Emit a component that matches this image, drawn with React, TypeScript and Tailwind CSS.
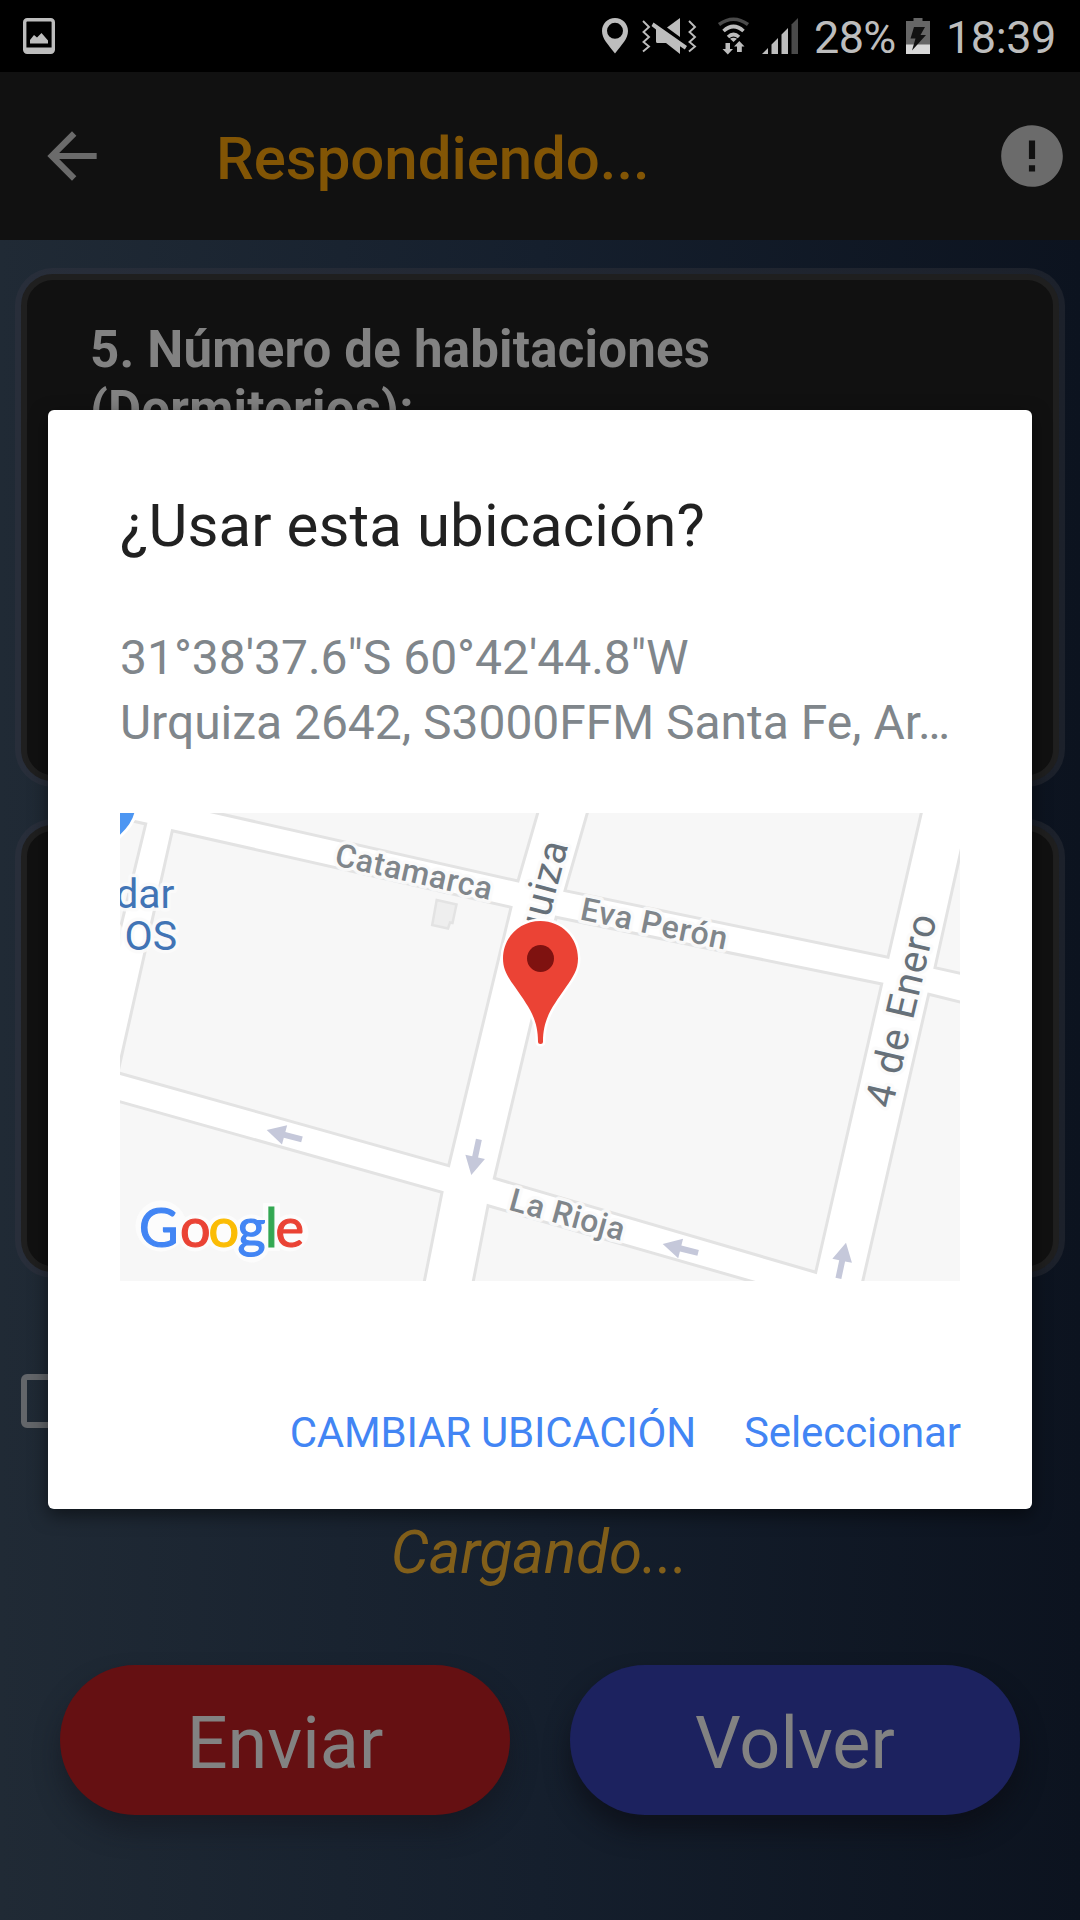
import type { ReactNode } from 'react';

const HEADER_ICON = '#6b6b6b';

function StatusBar() {
  return (
    <div className="flex h-[72px] items-center bg-black pl-[23px] pr-[24px] text-[45px] leading-none text-[#bdbdbd]">
      <svg width="32" height="36" viewBox="0 0 32 36" className="shrink-0">
        <rect x="1.7" y="1.7" width="28.6" height="32.6" rx="2.5" fill="none" stroke="#bdbdbd" strokeWidth="3.4" />
        <path d="M1 29.5H31V34H1Z" fill="#bdbdbd" />
        <path d="M7 25.5V22L11 17L14 19.5L18.5 15L25 22.5V25.5Z" fill="#bdbdbd" />
      </svg>
      <div className="grow" />
      <svg width="200" height="40" viewBox="600 16 200 40" className="mr-[15px] shrink-0" fill="#bdbdbd">
        <path
          fillRule="evenodd"
          d="M616 18C608.5 18 603 23.700 603 31C603 39 609 44 616 53.600C623 44 629 39 629 31C629 23.700 623.500 18 616 18ZM616 22.800A8 8 0 0 1 616 38.800A8 8 0 0 1 616 22.800Z"
        />
        <g fill="none" stroke="#bdbdbd" strokeWidth="1.900">
          <path d="M644 21L650 27L644.500 32L650 37L644.500 42L650 46.500L644 51.500" />
          <path d="M690 21L696 27L690.500 32L696 37L690.500 42L696 46.500L690 51.500" />
        </g>
        <path d="M681 18V37L668 27.500Z" />
        <path d="M654.500 22.500L688 46L685.800 49.500L681 46.200V54L667 43H658.500Q657 43 657 41.500V29.500L652.500 26Z" />
        <g fill="none" strokeWidth="3.600">
          <path d="M720 24.500Q734.500 14 749 24.500" stroke="#4a4a4a" />
          <path d="M724.500 31Q734.500 22 744.500 31" stroke="#bdbdbd" />
          <path d="M729 37Q734.500 32 740 37" stroke="#bdbdbd" />
        </g>
        <path d="M734.500 42L731 38.800Q734.500 36.800 738 38.800Z" />
        <path d="M726.500 43H731V49H734L728.800 54.500L723.500 49H726.500Z" />
        <path d="M738 52V46.500H735L740.300 41L745.500 46.500H742.800V52Z" />
        <path d="M763 54L769 48V54ZM772.500 54V44.500L779 38V54ZM782.500 54V34.500L789 28V54Z" />
        <path d="M792.500 54V24.500L799 18V54Z" fill="#4a4a4a" />
      </svg>
      <span className="mt-[2px] w-[80px] whitespace-nowrap tracking-[-0.6px]">28%</span>
      <svg width="24" height="36" viewBox="0 0 24 36" className="ml-[12px] mr-[16px] shrink-0">
        <path d="M7.500 0H16.500V3H24V36H0V3H7.500Z" fill="#666" />
        <path d="M0 26.500H24V36H0Z" fill="#d8d8d8" />
        <path d="M8 9H19L14.500 17H20L6 32.500L9.500 20.500H4.500Z" fill="#111" />
      </svg>
      <span className="mt-[2px] whitespace-nowrap tracking-[-0.4px]">18:39</span>
    </div>
  );
}

function Header() {
  return (
    <header className="flex h-[168px] items-center bg-[#111111] pl-[35px] pr-[11px]">
      <svg width="74" height="74" viewBox="0 0 24 24" fill={HEADER_ICON}>
        <path d="M20 11H7.830l5.590-5.590L12 4l-8 8 8 8 1.410-1.410L7.830 13H20v-2z" />
      </svg>
      <h1 className="ml-[107px] mt-[6px] grow text-[60px] font-medium leading-[72px] tracking-[-0.05px] text-[#825505]">Respondiendo...</h1>
      <svg width="74" height="74" viewBox="0 0 24 24" fill={HEADER_ICON}>
        <path d="M12 2C6.480 2 2 6.480 2 12s4.480 10 10 10 10-4.480 10-10S17.520 2 12 2zm1 15h-2v-2h2v2zm0-4h-2V7h2v6z" />
      </svg>
    </header>
  );
}

function Card({ className, children }: { className: string; children?: ReactNode }) {
  return (
    <section className={`mx-[15px] rounded-[38px] bg-linear-to-r from-[#282e3a] to-[#1c212b] p-[6px] ${className}`}>
      <div className="h-full rounded-[32px] border-[6px] border-[#1f1f1f] bg-[#111111] px-[63px] pt-[40px]">{children}</div>
    </section>
  );
}

const BLOCKS = [
  '-10,3 25.700,11 -10,158',
  '52.300,17.700 391,94.300 328.700,352.700 -2.200,259.700',
  '50,-10.500 398,68 420.600,-10',
  '470.200,-10 445,77.700 768,144.300 803.600,-10',
  '850,-3 815,154.700 850,162.500',
  '436.200,104.300 761.700,171 695.700,459.300 374.300,365.300',
  '808.700,181.300 850,191.500 850,480 740,480',
  '-10,285.900 322,379.300 302,480 -10,480',
  '368,392.700 351,480 672,480',
];

const ARROWS = [
  { x: 146.700, y: 317, turn: -75 },
  { x: 351.300, y: 362, turn: 192 },
  { x: 542.700, y: 431, turn: -76 },
  { x: 726, y: 429.700, turn: 12 },
];

const LOGO_LETTERS = [
  { x: 19, letter: 'G', color: '#4285f4' },
  { x: 60, letter: 'o', color: '#ea4335' },
  { x: 88.5, letter: 'o', color: '#fbbc05' },
  { x: 117.5, letter: 'g', color: '#4285f4' },
  { x: 145, letter: 'l', color: '#34a853' },
  { x: 155.5, letter: 'e', color: '#ea4335' },
];

function LocationMap() {
  return (
    <svg width="840" height="468" viewBox="0 0 840 468" className="block bg-white">
      <g fill="#f7f7f7" stroke="#e3e3e3" strokeWidth="3">
        {BLOCKS.map((points) => (
          <polygon key={points} points={points} />
        ))}
        <path d="M316.700 87L336.500 91.500L332.500 110L330 109.500L328 115.500L312.200 112Z" fill="#eeeeee" strokeWidth="2.500" />
      </g>
      <g fill="#c5c8da">
        {ARROWS.map((a) => (
          <path key={a.x} d="M0 0L10 18.500H3V36.500H-3V18.500H-10Z" transform={`translate(${a.x} ${a.y}) rotate(${a.turn})`} />
        ))}
      </g>
      <path d="M-4 -4H16.500Q15 12 -4 27Z" fill="#4d96f2" stroke="#fff" strokeWidth="3" />
      <g stroke="#fbfbfb" strokeOpacity="0.85" strokeWidth="7" strokeLinejoin="round" style={{ paintOrder: 'stroke' }}>
        <g fill="#4174b5" fontSize="41">
          <text x="54.500" y="95.300" textAnchor="end">dar</text>
          <text x="57" y="137.300" textAnchor="end" dx="0 2.500 0">DOS</text>
        </g>
        <g fill="#80868b" fontSize="32" fontWeight="500">
          <text transform="translate(213.500 52) rotate(12.600)" textLength="160">Catamarca</text>
          <text transform="translate(459 106.300) rotate(11.700)" textLength="149">Eva Perón</text>
          <text transform="translate(387.500 396.500) rotate(15.400)" textLength="118">La Rioja</text>
        </g>
        <g fill="#667079" fontSize="40">
          <text transform="translate(772 296.500) rotate(-76.800)" textLength="197">4 de Enero</text>
          <text transform="translate(448.500 32) rotate(-75)" textAnchor="end" textLength="140">Urquiza</text>
        </g>
      </g>
      <path
        d="M420.500 108C399.500 108 383 124.500 383 145.500C383 157 388 164 395 174C408 193 418 205 418 228.500Q418 231 420.500 231Q423 231 423 228.500C423 205 433 193 446 174C453 164 458 157 458 145.500C458 124.500 441.500 108 420.500 108Z"
        fill="#eb4335"
        stroke="#fff"
        strokeWidth="5"
        style={{ paintOrder: 'stroke' }}
      />
      <circle cx="420.500" cy="145.500" r="13.500" fill="#7f1210" />
      <g fill="#fcfcfc">
        <circle cx="41" cy="413" r="25.500" />
        <circle cx="75" cy="420" r="18.500" />
        <circle cx="103.500" cy="420" r="18.500" />
        <circle cx="131.500" cy="420" r="18.500" />
        <circle cx="131.500" cy="431" r="18.500" />
        <rect x="143" y="390" width="17" height="48" rx="1" />
        <circle cx="170" cy="420" r="18.500" />
      </g>
      <text y="433.500" fontFamily="Lato" fontSize="54" strokeWidth="1.200">
        {LOGO_LETTERS.map((l) => (
          <tspan key={l.x} x={l.x} fill={l.color} stroke={l.color}>
            {l.letter}
          </tspan>
        ))}
      </text>
    </svg>
  );
}

function LocationDialog() {
  return (
    <div
      role="dialog"
      className="absolute left-12 top-[410px] flex h-[1099px] w-[984px] flex-col rounded-[6px] bg-white px-[72px] shadow-[0_6px_18px_rgba(0,0,0,0.5)]"
    >
      <h2 className="mt-[80px] text-[60px] leading-[72px] tracking-[0.08px] text-[#212121]">¿Usar esta ubicación?</h2>
      <p className="mt-[63px] whitespace-nowrap text-[48px] leading-[65px] tracking-[-0.03px] text-[#80868b]">
        31°38'37.6"S 60°42'44.8"W
        <br />
        Urquiza 2642, S3000FFM Santa Fe, Ar…
      </p>
      <div className="mt-[58px]">
        <LocationMap />
      </div>
      <div className="-mr-px mt-[127px] flex justify-end gap-12 whitespace-nowrap text-[42px] leading-[50px] text-[#4285f4]">
        <button className="tracking-[-0.22px]">CAMBIAR UBICACIÓN</button>
        <button className="tracking-[-0.1px]">Seleccionar</button>
      </div>
    </div>
  );
}

export default function App() {
  return (
    <div className="relative flex h-[1920px] w-[1080px] flex-col overflow-hidden bg-linear-to-r from-[#202a35] via-[#151f2d] to-[#0c131f] font-['Roboto',sans-serif]">
      <StatusBar />
      <Header />
      <Card className="mt-[28px] h-[519px]">
        <p className="text-[51px] font-bold leading-[60px] tracking-[0.2px] text-[#828282]">
          5. Número de habitaciones
          <br />
          (Dormitorios):
        </p>
      </Card>
      <Card className="mt-[32px] h-[459px]" />
      <div className="ml-[21px] mt-[96px] size-[54px] rounded-[6px] border-[6px] border-[#63666a]" />
      <p className="mt-[89px] pr-px text-center text-[60px] italic leading-[72px] text-[#825f1a]">Cargando...</p>
      <div className="mt-[76px] flex gap-[60px] px-[60px] text-[72px] text-[#828282]">
        <button className="h-[150px] w-[450px] rounded-full bg-[#651012] pt-[7px] shadow-[0_16px_24px_rgba(18,20,28,0.5)]">Enviar</button>
        <button className="h-[150px] w-[450px] rounded-full bg-[#1c225f] pt-[7px] shadow-[0_16px_24px_rgba(10,12,20,0.65)]">Volver</button>
      </div>
      <LocationDialog />
    </div>
  );
}
